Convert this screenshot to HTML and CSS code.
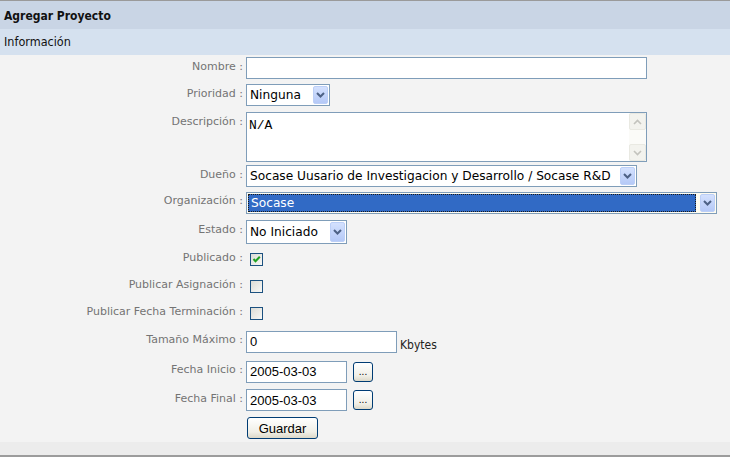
FILE: index.html
```html
<!DOCTYPE html>
<html lang="es">
<head>
<meta charset="utf-8">
<title>Agregar Proyecto</title>
<link rel="stylesheet" href="styles.css">
</head>
<body>
<div class="panel">
  <div class="title">Agregar Proyecto</div>
  <div class="section">Información</div>
  <form class="form">
    <label class="lbl">Nombre :</label>
    <input class="txt txt-name" type="text" value="">

    <label class="lbl">Prioridad :</label>
    <span class="sel sel-prio"><span class="sel-val">Ninguna</span><span class="sel-btn"><svg width="9" height="6" viewBox="0 0 9 6"><path d="M1 1 L4.5 4.5 L8 1" fill="none" stroke="#4d6185" stroke-width="2"/></svg></span></span>

    <label class="lbl lbl-top">Descripción :</label>
    <span class="area"><span class="area-text">N/A</span><span class="scroll"><span class="sb-btn"><svg width="9" height="6" viewBox="0 0 9 6"><path d="M1 5 L4.5 1.5 L8 5" fill="none" stroke="#c3c3bd" stroke-width="1.6"/></svg></span><span class="sb-track"></span><span class="sb-btn"><svg width="9" height="6" viewBox="0 0 9 6"><path d="M1 1 L4.5 4.5 L8 1" fill="none" stroke="#c3c3bd" stroke-width="1.6"/></svg></span></span></span>

    <label class="lbl">Dueño :</label>
    <span class="sel sel-owner"><span class="sel-val">Socase Uusario de Investigacion y Desarrollo / Socase R&amp;D</span><span class="sel-btn"><svg width="9" height="6" viewBox="0 0 9 6"><path d="M1 1 L4.5 4.5 L8 1" fill="none" stroke="#4d6185" stroke-width="2"/></svg></span></span>

    <label class="lbl">Organización :</label>
    <span class="sel sel-org"><span class="sel-val sel-hl">Socase</span><span class="sel-btn"><svg width="9" height="6" viewBox="0 0 9 6"><path d="M1 1 L4.5 4.5 L8 1" fill="none" stroke="#4d6185" stroke-width="2"/></svg></span></span>

    <label class="lbl">Estado :</label>
    <span class="sel sel-state"><span class="sel-val">No Iniciado</span><span class="sel-btn"><svg width="9" height="6" viewBox="0 0 9 6"><path d="M1 1 L4.5 4.5 L8 1" fill="none" stroke="#4d6185" stroke-width="2"/></svg></span></span>

    <label class="lbl">Publicado :</label>
    <span class="chk"><svg width="11" height="11" viewBox="0 0 11 11"><path d="M2.5 5 L4.5 7.2 L8.8 2.8" fill="none" stroke="#21a121" stroke-width="2"/></svg></span>

    <label class="lbl">Publicar Asignación :</label>
    <span class="chk"></span>

    <label class="lbl">Publicar Fecha Terminación :</label>
    <span class="chk"></span>

    <label class="lbl">Tamaño Máximo :</label>
    <span class="inline"><input class="txt txt-size" type="text" value="0"><span class="unit">Kbytes</span></span>

    <label class="lbl">Fecha Inicio :</label>
    <span class="inline"><input class="txt txt-date" type="text" value="2005-03-03"><button type="button" class="btn btn-dots">...</button></span>

    <label class="lbl">Fecha Final :</label>
    <span class="inline"><input class="txt txt-date" type="text" value="2005-03-03"><button type="button" class="btn btn-dots">...</button></span>

    <span class="lbl"></span>
    <button type="button" class="btn btn-save">Guardar</button>
  </form>
  <div class="foot"></div>
</div>
</body>
</html>
```

FILE: styles.css
```css
html, body {
  margin: 0;
  padding: 0;
  background: #ffffff;
}

.panel {
  width: 730px;
  border-top: 1px solid #9a9a9a;
  border-bottom: 2px solid #9c9c9c;
  font-family: "DejaVu Sans Condensed", "DejaVu Sans", sans-serif;
}

.title {
  height: 28px;
  background: #c9d5e5;
  padding-left: 4px;
  font-size: 12px;
  font-weight: bold;
  line-height: 30px;
  color: #111;
}

.section {
  height: 26px;
  background: #d5e1ef;
  padding-left: 4px;
  font-size: 12.5px;
  line-height: 26px;
  color: #111;
}

.form {
  margin: 0;
  background: #f3f3f3;
  display: grid;
  grid-template-columns: 243px auto;
  grid-template-rows: 26px 28px 54px 26px 27px 31px 25px 28px 26px 31px 29px 28px 28px;
  column-gap: 3px;
  align-items: center;
  justify-items: start;
}

.foot {
  height: 13px;
  background: #ececec;
}

.lbl {
  justify-self: end;
  font-family: "DejaVu Sans", sans-serif;
  font-size: 11px;
  color: #747474;
  padding-bottom: 4px;
  white-space: nowrap;
}

.lbl-top {
  align-self: start;
  padding-top: 6px;
  padding-bottom: 0;
}

.txt {
  box-sizing: border-box;
  height: 22px;
  border: 1px solid #7f9db9;
  background: #fff;
  margin: 0;
  padding: 0 3px;
  font-family: "Liberation Sans", Arial, sans-serif;
  font-size: 13px;
  color: #000;
  outline: none;
}

.txt-name { width: 401px; }
.txt-size { width: 151px; }
.txt-date { width: 101px; }

.inline {
  display: flex;
  align-items: center;
}

.unit {
  margin-left: 3px;
  margin-top: 6px;
  font-size: 12px;
  color: #222;
}

.sel {
  box-sizing: border-box;
  display: inline-flex;
  align-items: stretch;
  height: 22px;
  border: 1px solid #7f9db9;
  background: #fff;
  font-family: "DejaVu Sans", sans-serif;
  font-size: 12.2px;
  color: #000;
}

.sel-prio { width: 84px; }
.sel-owner { width: 391px; }
.sel-org { width: 471px; background: #fffcf0; }
.sel-state { width: 101px; height: 24px; }

.sel-val {
  flex: 1;
  display: flex;
  align-items: center;
  padding: 0 3px;
  white-space: nowrap;
  overflow: hidden;
}

.sel-hl {
  margin: 1px 3px 1px 1px;
  padding-left: 3px;
  background: #316ac5;
  color: #fff;
  outline: 1px dotted #1a1a1a;
  outline-offset: -1px;
}

.sel-btn {
  width: 15px;
  margin: 1px;
  box-sizing: border-box;
  border: 1px solid #bccff7;
  border-radius: 2px;
  background: linear-gradient(#d4e1fe, #b5c9f7);
  display: flex;
  align-items: center;
  justify-content: center;
}

.area {
  box-sizing: border-box;
  width: 401px;
  height: 50px;
  border: 1px solid #7f9db9;
  background: #fff;
  display: flex;
  align-self: start;
  margin-top: 3px;
}

.area-text {
  flex: 1;
  padding: 6px 2px;
  font-family: "Liberation Mono", "Courier New", monospace;
  font-size: 13px;
  line-height: 14px;
  color: #000;
}

.scroll {
  width: 17px;
  display: flex;
  flex-direction: column;
  background: #fbfbf8;
}

.sb-btn {
  box-sizing: border-box;
  height: 17px;
  border: 1px solid #e9e9e2;
  border-radius: 2px;
  background: #f3f3ee;
  display: flex;
  align-items: center;
  justify-content: center;
}

.sb-track { flex: 1; }

.chk {
  box-sizing: border-box;
  width: 13px;
  height: 13px;
  margin-left: 4px;
  border: 1px solid #1c5180;
  background: linear-gradient(135deg, #dcdcd6, #f8f8f6);
  display: flex;
  align-items: center;
  justify-content: center;
}

.btn {
  box-sizing: border-box;
  margin: 0;
  border: 1px solid #003c74;
  border-radius: 3px;
  background: linear-gradient(#ffffff, #f0efe7 70%, #dcd8c8);
  font-family: "Liberation Sans", Arial, sans-serif;
  color: #000;
  padding: 0;
}

.btn-dots {
  width: 20px;
  height: 20px;
  margin-left: 6px;
  font-size: 10px;
  line-height: 14px;
}

.btn-save {
  width: 71px;
  height: 22px;
  margin-left: 1px;
  font-size: 13px;
}
```
